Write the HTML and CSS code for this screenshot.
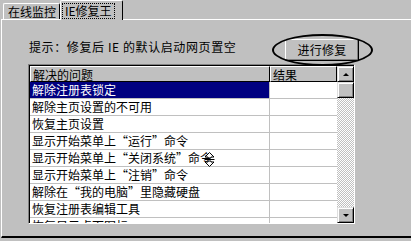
FILE: index.html
```html
<!DOCTYPE html>
<html lang="zh">
<head>
    <meta charset="utf-8">
    <link rel="stylesheet" href="styles.css">
    <title>IE修复王</title>
</head>
<body>
    <div class="tabs">
        <span class="tab">在线监控</span>
        <span class="tab active"><span class="focus">IE修复王</span></span>
    </div>

    <div class="panel">
        <div class="hint-row">
            <span class="hint">提示：修复后 IE 的默认启动网页置空</span>
            <div class="btn-wrap">
                <button class="btn">进行修复</button>
                <div class="ring"></div>
            </div>
        </div>

        <div class="list">
            <div class="grid">
                <div class="head">
                    <span class="c1">解决的问题</span>
                    <span class="c2">结果</span>
                </div>
                <div class="row sel"><span class="c1">解除注册表锁定</span><span class="c2"></span></div>
                <div class="row"><span class="c1">解除主页设置的不可用</span><span class="c2"></span></div>
                <div class="row"><span class="c1">恢复主页设置</span><span class="c2"></span></div>
                <div class="row"><span class="c1">显示开始菜单上“运行”命令</span><span class="c2"></span></div>
                <div class="row"><span class="c1">显示开始菜单上“关闭系统”命令</span><span class="c2"></span></div>
                <div class="row"><span class="c1">显示开始菜单上“注销”命令</span><span class="c2"></span></div>
                <div class="row"><span class="c1">解除在“我的电脑”里隐藏硬盘</span><span class="c2"></span></div>
                <div class="row"><span class="c1">恢复注册表编辑工具</span><span class="c2"></span></div>
                <div class="row"><span class="c1">恢复显示桌面图标</span><span class="c2"></span></div>
                <svg class="cursor" width="11" height="15" viewBox="0 0 11 15">
                    <path d="M5.5 0.5 L10 5 L7 5 L7 6 L4 6 L4 5 L1 5 Z" fill="#fff" stroke="#000"/>
                    <path d="M0.5 7.5 H10.5" stroke="#000"/>
                    <path d="M5.5 14.5 L10 10 L7 10 L7 9 L4 9 L4 10 L1 10 Z" fill="#fff" stroke="#000"/>
                </svg>
            </div>
            <div class="scroll">
                <div class="sbtn"><span class="up"></span></div>
                <div class="thumb"></div>
                <div class="track"></div>
                <div class="sbtn"><span class="down"></span></div>
            </div>
        </div>
    </div>
</body>
</html>
```

FILE: styles.css
```css
body {
    margin: 0;
    width: 411px;
    height: 241px;
    overflow: hidden;
    background-color: #c0c0c0;
    font-family: "Noto Sans CJK SC", "DejaVu Sans", sans-serif;
    font-size: 12px;
    color: #000;
}

.tabs {
    display: flex;
    align-items: flex-end;
    height: 19px;
    padding-left: 3px;
}

.tab {
    box-sizing: border-box;
    height: 16px;
    width: 57px;
    padding-left: 4px;
    line-height: 15px;
    border-top: 1px solid #fff;
    border-left: 1px solid #fff;
    border-right: 1px solid #000;
    border-radius: 2px 2px 0 0;
}

.tab.active {
    height: 20px;
    width: 63px;
    margin-bottom: -1px;
    padding: 2px 0 0 2px;
    position: relative;
    background-color: #c0c0c0;
}

.focus {
    display: inline-block;
    padding: 0 2px;
    line-height: 14px;
    outline: 1px dotted #000;
}

.panel {
    box-sizing: border-box;
    height: 219px;
    margin-left: 1px;
    border-top: 1px solid #fff;
    border-left: 1px solid #fff;
    border-bottom: 2px solid #000;
}

.hint-row {
    display: flex;
    align-items: center;
    height: 43px;
    padding-left: 27px;
}

.hint {
    letter-spacing: 0.6px;
    margin-top: 9px;
}

.btn-wrap {
    position: relative;
    margin-left: auto;
    margin-right: 52px;
    margin-top: 16px;
}

.btn {
    display: block;
    width: 74px;
    height: 22px;
    padding: 0;
    font-family: "Noto Sans CJK SC", sans-serif;
    font-size: 12px;
    background-color: #c0c0c0;
    border: 1px solid;
    border-color: #fff #000 #000 #fff;
    box-shadow: inset -1px -1px #808080;
    letter-spacing: 0.3px;
}

.ring {
    position: absolute;
    left: -13px;
    top: -5px;
    width: 97px;
    height: 28px;
    border: 2px solid #000;
    border-radius: 50%;
}

.list {
    display: flex;
    width: 324px;
    height: 157px;
    margin: 1px 0 0 26px;
    border: 1px solid;
    border-color: #808080 #fff #fff #808080;
    box-shadow: inset 1px 1px #000;
    padding: 1px 0 0 1px;
}

.grid {
    position: relative;
    flex: 1;
    background-color: #fff;
    overflow: hidden;
}

.head {
    display: flex;
    height: 16px;
    background-color: #c0c0c0;
}

.head span {
    box-sizing: border-box;
    height: 16px;
    line-height: 15px;
    padding-left: 2px;
    border-top: 1px solid #fff;
    border-left: 1px solid #fff;
    border-right: 1px solid #000;
    border-bottom: 1px solid #000;
}

.c1 {
    width: 240px;
}

.c2 {
    width: 67px;
}

.row {
    display: flex;
    height: 17px;
}

.row span {
    box-sizing: border-box;
    height: 17px;
    line-height: 16px;
    padding-left: 2px;
    border-bottom: 1px solid #c0c0c0;
    white-space: nowrap;
    overflow: hidden;
}

.row .c1 {
    border-right: 1px solid #c0c0c0;
}

.row.sel .c1 {
    background-color: #000080;
    color: #fff;
}

.cursor {
    position: absolute;
    left: 174px;
    top: 86px;
}

.scroll {
    display: flex;
    flex-direction: column;
    width: 17px;
}

.sbtn,
.thumb {
    box-sizing: border-box;
    height: 16px;
    display: flex;
    align-items: center;
    justify-content: center;
    background-color: #c0c0c0;
    border: 1px solid;
    border-color: #dfdfdf #000 #000 #dfdfdf;
    box-shadow: inset 1px 1px #fff, inset -1px -1px #808080;
}

.track {
    flex: 1;
    background: repeating-conic-gradient(#fff 0 25%, #c0c0c0 0 50%) 0 0 / 2px 2px;
}

.up,
.down {
    width: 0;
    height: 0;
    border-left: 3px solid transparent;
    border-right: 3px solid transparent;
}

.up {
    border-bottom: 3px solid #000;
}

.down {
    border-top: 3px solid #000;
}
```
